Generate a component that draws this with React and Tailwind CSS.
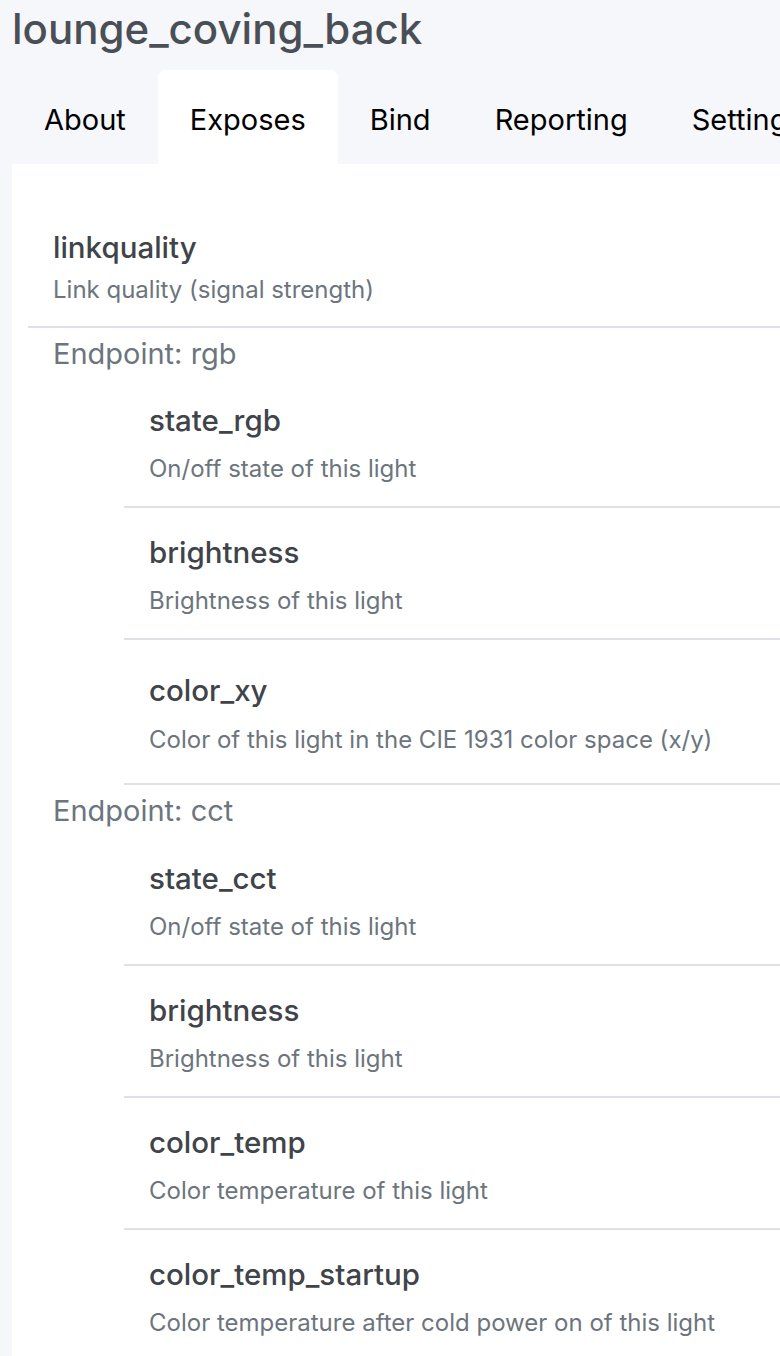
import React from 'react';

const font = { fontFamily: 'Inter, "Liberation Sans", sans-serif' };

const tabs = ['About', 'Exposes', 'Bind', 'Reporting', 'Settings'];

function Feature({ name, desc, pad = 'pt-[26px] pb-[21px]', gap = 'mt-[15px]' }) {
  return (
    <div className={`ml-[112px] border-b-2 border-[#dee2e6] pl-[25px] ${pad}`}>
      <div className="text-[29.5px] leading-[36px] font-medium text-[#3f444a]">{name}</div>
      <div className={`${gap} text-[24px] leading-[32px] text-[#6c757d]`}>{desc}</div>
    </div>
  );
}

function Endpoint({ name }) {
  return (
    <div className="mt-[8px] pl-[41px] text-[29px] leading-[36px] text-[#6c757d]">
      Endpoint: {name}
    </div>
  );
}

export default function App() {
  return (
    <div style={font} className="min-h-screen w-[780px] overflow-hidden bg-[#f6f7fb]">
      <h1 className="pl-[12px] pt-[4px] text-[42px] leading-[50px] font-medium text-[#4a4f56] whitespace-nowrap">
        lounge_coving_back
      </h1>

      <div className="mt-[16px] flex pl-[12px] whitespace-nowrap">
        {tabs.map((t) => (
          <div
            key={t}
            className={`h-[94px] flex items-center px-[32px] pt-[5px] text-[29px] text-black ${
              t === 'Exposes' ? 'bg-white rounded-t-[8px]' : ''
            }`}
          >
            {t}
          </div>
        ))}
      </div>

      <div className="ml-[12px] bg-white pb-[40px]">
        <div className="ml-[16px] border-b-2 border-[#dee2e6] pl-[25px] pt-[65px] pb-[20px]">
          <div className="text-[29.5px] leading-[36px] font-medium text-[#3f444a]">linkquality</div>
          <div className="mt-[9px] text-[24px] leading-[32px] text-[#6c757d]">Link quality (signal strength)</div>
        </div>

        <Endpoint name="rgb" />
        <Feature name="state_rgb" desc="On/off state of this light" pad="pt-[30px] pb-[21px]" />
        <Feature name="brightness" desc="Brightness of this light" />
        <Feature
          name="color_xy"
          desc="Color of this light in the CIE 1931 color space (x/y)"
          pad="pt-[32px] pb-[27px]"
          gap="mt-[16px]"
        />

        <Endpoint name="cct" />
        <Feature name="state_cct" desc="On/off state of this light" pad="pt-[31px] pb-[21px]" />
        <Feature name="brightness" desc="Brightness of this light" />
        <Feature name="color_temp" desc="Color temperature of this light" />
        <Feature name="color_temp_startup" desc="Color temperature after cold power on of this light" />
      </div>
    </div>
  );
}
